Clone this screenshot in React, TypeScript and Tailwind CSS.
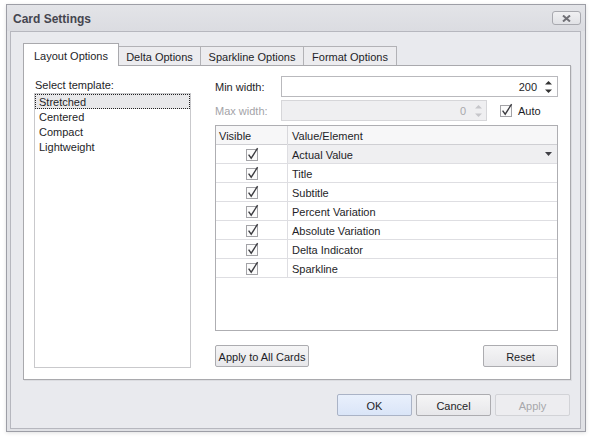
import React from "react";

const CheckBox = () => (
  <svg width="14" height="14" viewBox="0 0 14 14" className="block">
    <rect x="0.5" y="2.5" width="11" height="11" fill="#fbfbfb" stroke="#a3a3a7" />
    <path d="M2.6 7.6 L5.2 11.2 L11.6 1.2" fill="none" stroke="#3c3c40" strokeWidth="1.4" />
  </svg>
);

const Spin = ({ color }: { color: string }) => (
  <svg width="9" height="14" viewBox="0 0 9 14" className="block">
    <polygon points="1,4.5 8,4.5 4.5,1" fill={color} />
    <polygon points="1,9.5 8,9.5 4.5,13" fill={color} />
  </svg>
);

const rows = [
  "Actual Value",
  "Title",
  "Subtitle",
  "Percent Variation",
  "Absolute Variation",
  "Delta Indicator",
  "Sparkline",
];

export default function App() {
  return (
    <div className="w-[593px] h-[442px] bg-white pt-[4px] pl-[6px] font-['Liberation_Sans',Arial,sans-serif] text-[11px] leading-[13px] text-[#1e1e28]">
      <div className="w-[580px] h-[428px] border border-[#9d9ea6] bg-[#e0e1e5] flex flex-col shadow-[0_1px_4px_rgba(0,0,0,0.12)]">
        {/* Title bar */}
        <div className="h-[26px] flex items-center justify-between pl-[6px] pr-[4px] bg-linear-to-b from-[#e3e4e8] to-[#dbdce1]">
          <span className="font-bold text-[12px] text-[#45454f] translate-y-[1px]">Card Settings</span>
          <div className="w-[29px] h-[14px] border border-[#a8a9af] rounded-[3px] bg-linear-to-b from-[#f0f0f2] to-[#e1e2e6] flex items-center justify-center">
            <svg width="9" height="7" viewBox="0 0 9 7" className="block">
              <path d="M1 0.5 L8 6.5 M8 0.5 L1 6.5" stroke="#707076" strokeWidth="2" />
            </svg>
          </div>
        </div>

        {/* Client area */}
        <div className="ml-[3px] mr-[4px] mb-[2px] flex-1 border border-[#b6b7be] bg-[#e9eaee] pt-[11px] pl-[12px] pr-[9px] pb-[12px] flex flex-col">
          {/* Tabs */}
          <div className="flex items-end h-[22px]">
            <div className="relative z-10 w-[96px] h-[23px] -mb-[1px] bg-white border border-b-0 border-[#a9a9ad] flex justify-center pt-[6px]">
              Layout Options
            </div>
            <div className="w-[82px] h-[19px] bg-[#ececef] border-t border-r border-[#b2b2b6] flex justify-center pt-[4px]">
              Delta Options
            </div>
            <div className="w-[103px] h-[19px] bg-[#ececef] border-t border-r border-[#b2b2b6] flex justify-center pt-[4px]">
              Sparkline Options
            </div>
            <div className="w-[93px] h-[19px] bg-[#ececef] border-t border-r border-[#b2b2b6] flex justify-center pt-[4px]">
              Format Options
            </div>
          </div>

          {/* Tab panel */}
          <div className="h-[315px] border border-[#a9a9ad] bg-white flex pl-[10px] pr-[12px] shadow-[1px_1px_0_rgba(0,0,0,0.06)]">
            {/* Left column */}
            <div className="w-[157px] flex flex-col pt-[12px] pb-[11px]">
              <div className="pl-[1px] translate-y-[1px]">Select template:</div>
              <div className="mt-[2px] flex-1 border border-[#c9c9cc] flex flex-col">
                <div className="h-[15px] border border-dotted border-[#222] bg-[#e8e8ea] pl-[3px] leading-[14px]">
                  Stretched
                </div>
                <div className="h-[15px] pl-[4px] leading-[16px]">Centered</div>
                <div className="h-[15px] pl-[4px] leading-[16px]">Compact</div>
                <div className="h-[15px] pl-[4px] leading-[16px]">Lightweight</div>
              </div>
            </div>

            {/* Right column */}
            <div className="ml-[24px] flex-1 flex flex-col pt-[10px]">
              <div className="flex items-center h-[21px]">
                <div className="w-[66px] translate-y-[1px]">Min width:</div>
                <div className="flex-1 h-[21px] border border-[#b9b9bd] bg-white flex items-center justify-end pr-[4px]">
                  <span className="translate-y-[1px]">200</span>
                  <div className="ml-[7px]">
                    <Spin color="#333" />
                  </div>
                </div>
              </div>
              <div className="flex items-center h-[21px] mt-[3px]">
                <div className="w-[66px] text-[#a3a3a8] translate-y-[1px]">Max width:</div>
                <div className="w-[206px] h-[21px] border border-[#d6d6d9] bg-[#efeff1] flex items-center justify-end pr-[3px]">
                  <span className="text-[#a9a9ad] translate-y-[1px]">0</span>
                  <div className="ml-[8px]">
                    <Spin color="#c6c6ca" />
                  </div>
                </div>
                <div className="ml-[13px] -mt-[2px]">
                  <CheckBox />
                </div>
                <span className="ml-[4px] translate-y-[1px]">Auto</span>
              </div>

              {/* Grid */}
              <div className="mt-[4px] h-[206px] border border-[#aeaeb2] bg-white flex flex-col">
                <div className="h-[19px] flex border-b border-[#cfcfd3] bg-[#f7f7f8]">
                  <div className="w-[72px] border-r border-[#d8d8dc] pl-[3px] flex items-center">
                    <span className="translate-y-[1px]">Visible</span>
                  </div>
                  <div className="flex-1 pl-[4px] flex items-center">
                    <span className="translate-y-[1px]">Value/Element</span>
                  </div>
                </div>
                {rows.map((r, i) => (
                  <div key={r} className="h-[19px] flex border-b border-[#dedee2]">
                    <div className="w-[72px] border-r border-[#dedee2] flex items-center justify-center pl-[2px] -mt-[1px]">
                      <CheckBox />
                    </div>
                    <div
                      className={
                        i === 0
                          ? "flex-1 pl-[4px] pr-[5px] flex items-center justify-between bg-[#efeff1]"
                          : "flex-1 pl-[4px] flex items-center"
                      }
                    >
                      <span className="translate-y-[1px]">{r}</span>
                      {i === 0 && (
                        <svg width="7" height="4" viewBox="0 0 7 4" className="block">
                          <polygon points="0,0 7,0 3.5,4" fill="#404046" />
                        </svg>
                      )}
                    </div>
                  </div>
                ))}
              </div>

              <div className="mt-[14px] flex justify-between">
                <div className="w-[94px] h-[22px] border border-[#acacb0] rounded-[2px] bg-linear-to-b from-[#f5f5f6] to-[#e7e7ea] flex items-center justify-center">
                  <span className="translate-y-[1px]">Apply to All Cards</span>
                </div>
                <div className="w-[75px] h-[22px] border border-[#acacb0] rounded-[2px] bg-linear-to-b from-[#f5f5f6] to-[#e7e7ea] flex items-center justify-center">
                  <span className="translate-y-[1px]">Reset</span>
                </div>
              </div>
            </div>
          </div>

          {/* Dialog buttons */}
          <div className="mt-[14px] flex justify-end gap-[4px] pr-[1px]">
            <div className="w-[75px] h-[22px] border border-[#aab3c6] rounded-[2px] bg-linear-to-b from-[#e9f0fc] to-[#dae5f8] flex items-center justify-center">
              <span className="translate-y-[1px]">OK</span>
            </div>
            <div className="w-[75px] h-[22px] border border-[#acacb0] rounded-[2px] bg-linear-to-b from-[#f5f5f6] to-[#e7e7ea] flex items-center justify-center">
              <span className="translate-y-[1px]">Cancel</span>
            </div>
            <div className="w-[75px] h-[22px] border border-[#d2d3d7] rounded-[2px] bg-[#ededf0] text-[#a7a7ab] flex items-center justify-center">
              <span className="translate-y-[1px]">Apply</span>
            </div>
          </div>
        </div>
      </div>
    </div>
  );
}
